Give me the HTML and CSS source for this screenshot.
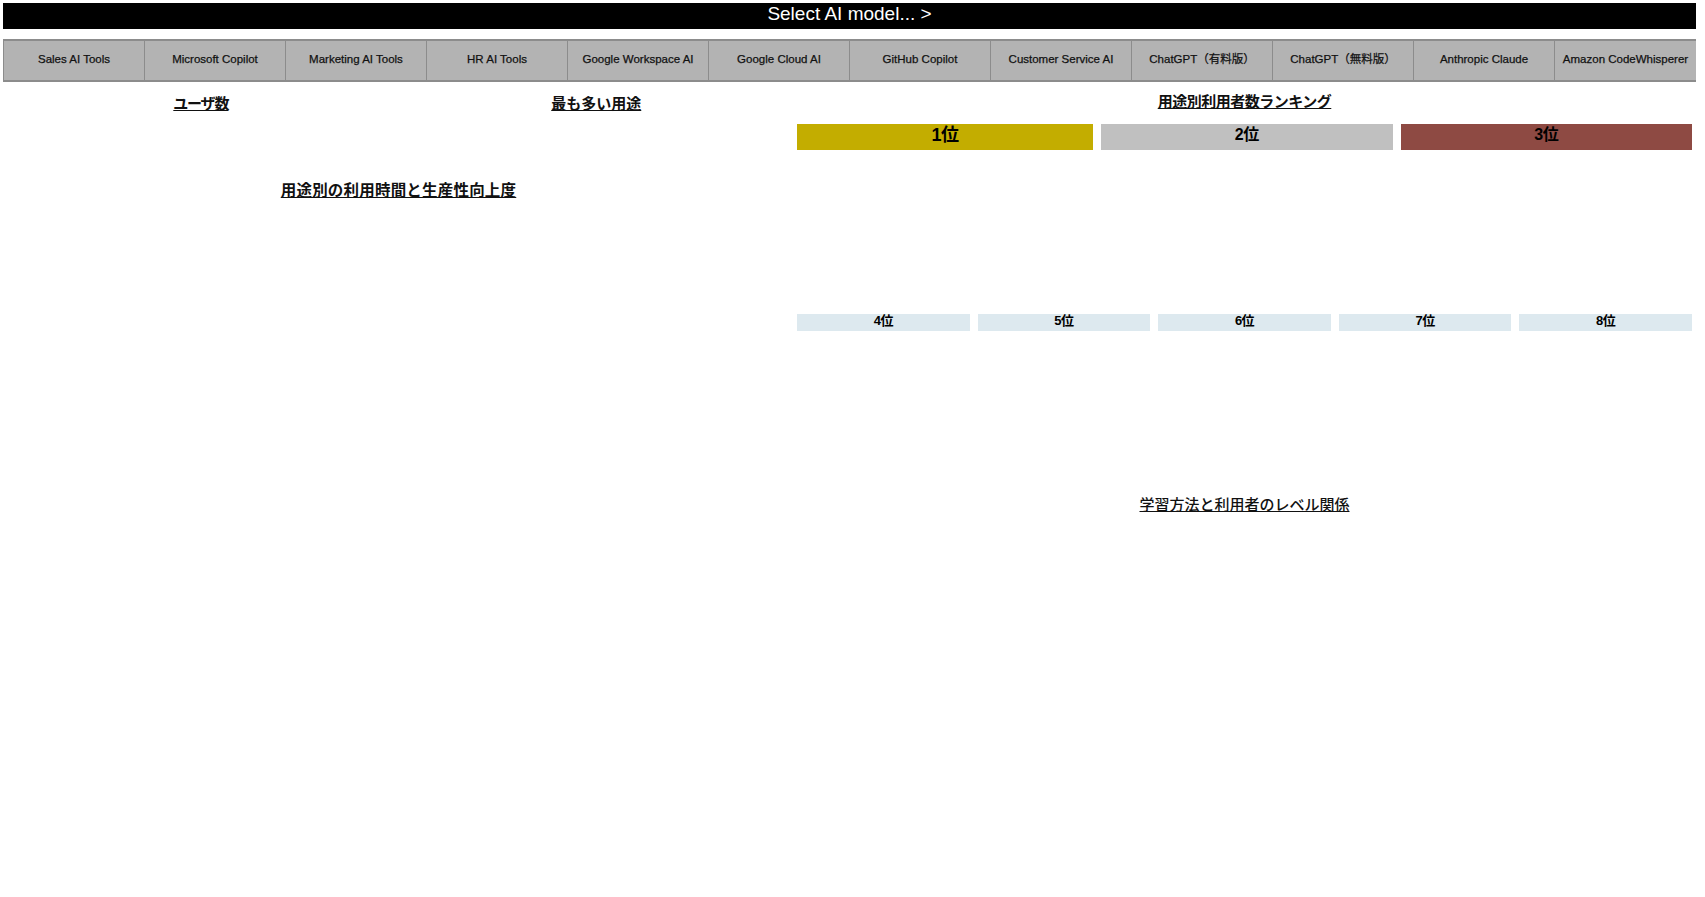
FILE: index.html
```html
<!DOCTYPE html>
<html lang="ja">
<head>
<meta charset="utf-8">
<title>AI Dashboard</title>
<link rel="stylesheet" href="styles.css">
</head>
<body>
<header class="title-bar">Select AI model... &gt;</header>
<nav class="model-nav">
  <div class="nav-item">Sales AI Tools</div>
  <div class="nav-item">Microsoft Copilot</div>
  <div class="nav-item">Marketing AI Tools</div>
  <div class="nav-item">HR AI Tools</div>
  <div class="nav-item">Google Workspace AI</div>
  <div class="nav-item">Google Cloud AI</div>
  <div class="nav-item">GitHub Copilot</div>
  <div class="nav-item">Customer Service AI</div>
  <div class="nav-item nav-jp">ChatGPT（有料版）</div>
  <div class="nav-item nav-jp">ChatGPT（無料版）</div>
  <div class="nav-item">Anthropic Claude</div>
  <div class="nav-item">Amazon CodeWhisperer</div>
</nav>
<main class="dashboard">
  <section class="left-col">
    <div class="top-row">
      <div class="panel"><h2 class="heading condensed">ユーザ数</h2></div>
      <div class="panel"><h2 class="heading">最も多い用途</h2></div>
    </div>
    <div class="panel usage-panel"><h2 class="heading wide">用途別の利用時間と生産性向上度</h2></div>
  </section>
  <section class="right-col">
    <h2 class="heading rank-heading">用途別利用者数ランキング</h2>
    <div class="top-ranks">
      <div class="rank rank-1">1位</div>
      <div class="rank rank-2">2位</div>
      <div class="rank rank-3">3位</div>
    </div>
    <div class="low-ranks">
      <div class="rank-small">4位</div>
      <div class="rank-small">5位</div>
      <div class="rank-small">6位</div>
      <div class="rank-small">7位</div>
      <div class="rank-small">8位</div>
    </div>
    <h2 class="heading learn-heading">学習方法と利用者のレベル関係</h2>
  </section>
</main>
</body>
</html>
```

FILE: styles.css
```css
html, body {
  margin: 0;
  padding: 0;
  background: #ffffff;
}

body {
  padding: 3px 9px 0 3px;
  font-family: "Liberation Sans", Arial, "Noto Sans CJK JP", sans-serif;
  color: #000;
}

.title-bar {
  background: #000;
  color: #fff;
  height: 26px;
  line-height: 22px;
  text-align: center;
  font-size: 19px;
}

.model-nav {
  margin-top: 10px;
  display: grid;
  grid-template-columns: repeat(12, 1fr);
  background: #b3b3b3;
  border-top: 2px solid #8c8c8c;
  border-bottom: 2px solid #8c8c8c;
  border-left: 1px solid #8c8c8c;
  height: 39px;
}

.nav-item {
  display: flex;
  align-items: center;
  justify-content: center;
  font-size: 11.5px;
  color: #111;
  border-right: 1px solid #8c8c8c;
  white-space: nowrap;
  padding-bottom: 3px;
  -webkit-text-stroke: 0.25px #111;
}

.nav-item:last-child {
  border-right: none;
}

.nav-jp {
  padding-bottom: 6px;
}

.dashboard {
  display: flex;
  gap: 3px;
  padding-right: 4px;
}

.left-col {
  width: 791px;
  flex: none;
}

.right-col {
  flex: 1;
}

.top-row {
  display: grid;
  grid-template-columns: 1fr 1fr;
}

.heading {
  margin: 0;
  font-family: "Noto Sans CJK JP", sans-serif;
  font-weight: 700;
  font-size: 15px;
  line-height: 20px;
  text-decoration: underline;
  text-align: center;
  color: #111;
}

.condensed {
  letter-spacing: -1.2px;
}

.wide {
  font-size: 15.5px;
  letter-spacing: 0.2px;
}

.top-row .heading {
  padding-top: 11px;
}

.top-row .panel {
  height: 97px;
}

.rank-heading {
  padding-top: 9px;
  letter-spacing: -0.5px;
}

.top-ranks {
  margin-top: 13px;
  display: grid;
  grid-template-columns: 296px 1fr 1fr;
  gap: 8px;
}

.rank {
  height: 26px;
  display: flex;
  align-items: center;
  justify-content: center;
  font-weight: 700;
  font-size: 16px;
  font-family: "Liberation Sans", "Noto Sans CJK JP", sans-serif;
  letter-spacing: -0.5px;
  padding-bottom: 8px;
  box-sizing: border-box;
}

.rank-1 {
  background: #c3ad00;
  font-size: 18px;
}

.rank-2 {
  background: #c0c0c0;
}

.rank-3 {
  background: #8e4a43;
}

.low-ranks {
  margin-top: 164px;
  display: grid;
  grid-template-columns: repeat(5, 1fr);
  gap: 8px;
}

.rank-small {
  height: 17px;
  background: #dde9ef;
  display: flex;
  align-items: center;
  justify-content: center;
  font-weight: 700;
  font-size: 13px;
  font-family: "Liberation Sans", "Noto Sans CJK JP", sans-serif;
  letter-spacing: -0.5px;
  padding-bottom: 7px;
  box-sizing: border-box;
}

.learn-heading {
  margin-top: 163px;
  font-weight: 500;
}
```
